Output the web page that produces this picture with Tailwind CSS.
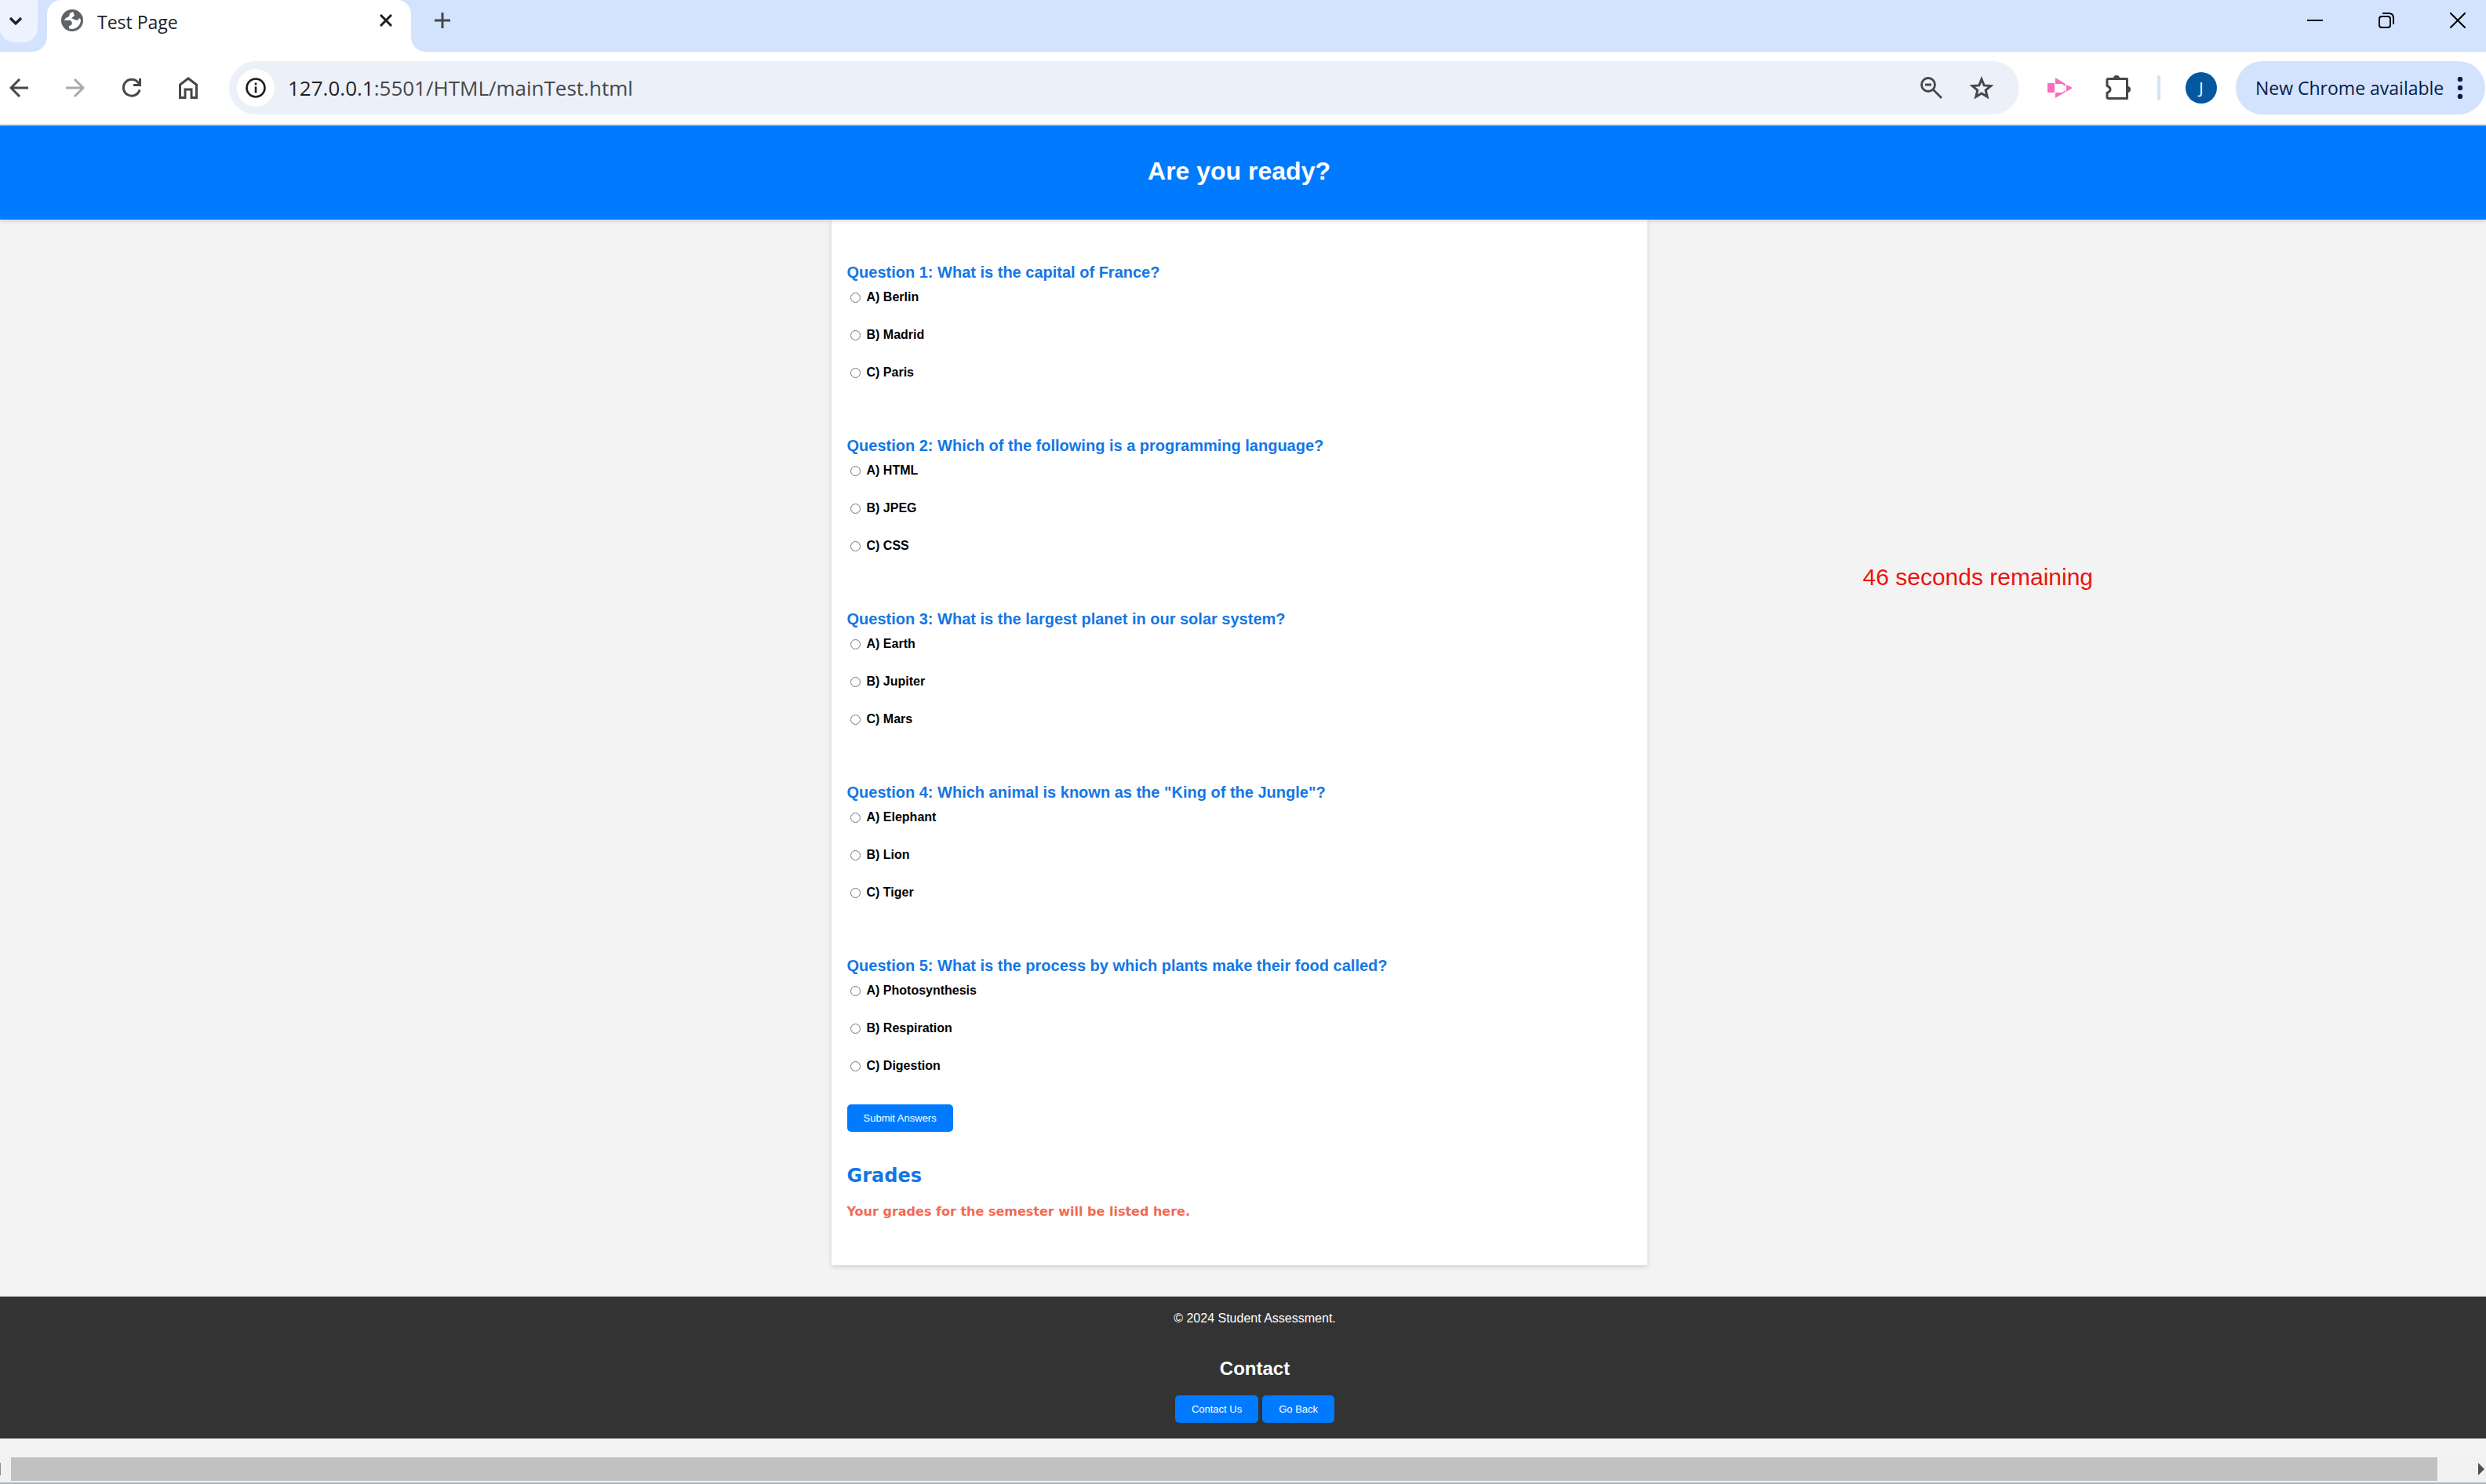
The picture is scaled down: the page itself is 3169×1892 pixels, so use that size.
<!DOCTYPE html>
<html lang="en">
<head>
<meta charset="utf-8">
<title>Test Page</title>
<script src="https://cdn.jsdelivr.net/npm/@tailwindcss/browser@4"></script>
</head>
<body class="flex min-h-screen flex-col bg-[#f3f3f3] font-['Liberation_Sans',Arial,sans-serif] text-black">

<!-- Tab strip -->
<div class="flex h-[66px] items-start bg-[#d3e2fd] font-['Open_Sans','Segoe_UI',sans-serif]">
  <button aria-label="Search tabs" class="flex h-[54px] w-12 items-center justify-center rounded-b-[18px] bg-[#ecf2fe] pr-2">
    <svg class="size-6" viewBox="0 0 24 24" fill="none" stroke="#1f1f1f" stroke-width="3.2"><path d="M5 8l7 7 7-7"/></svg>
  </button>
  <div class="relative ml-3 flex h-[66px] w-[464px] items-start rounded-t-[18px] bg-white pt-3 pl-[18px]">
    <svg class="absolute bottom-0 -left-5 size-5" viewBox="0 0 20 20"><path d="M20 0v20H0C12 20 20 12 20 0z" fill="#fff"/></svg>
    <svg class="absolute -right-5 bottom-0 size-5" viewBox="0 0 20 20"><path d="M0 0v20h20C8 20 0 12 0 0z" fill="#fff"/></svg>
    <svg class="size-7" viewBox="0 0 28 28"><circle cx="14" cy="14" r="14" fill="#5f6368"/><path d="M15 3L11 5 10 9 6 11 3.500 14H12L14 17 13 20 10 21V24.500C17 26.500 25 22 25 13L23 11 21 14 17 13 13 11 17 8z" fill="#fff"/></svg>
    <span class="ml-[18px] flex-1 text-[23px]/8 text-[#1f1f1f]">Test Page</span>
    <button aria-label="Close tab" class="mr-[18px] flex size-7 items-center justify-center">
      <svg class="size-4" viewBox="0 0 16 16" stroke="#1f1f1f" stroke-width="3"><path d="M1 1l14 14M15 1L1 15"/></svg>
    </button>
  </div>
  <button aria-label="New tab" class="ml-[26px] flex h-[52px] w-7 items-center justify-center">
    <svg class="size-5" viewBox="0 0 20 20" stroke="#474747" stroke-width="3"><path d="M10 0v20M0 10h20"/></svg>
  </button>
  <div class="ml-auto flex h-[52px] items-center pr-0.5">
    <button aria-label="Minimize" class="flex w-[91px] justify-center"><svg class="size-5" viewBox="0 0 20 20" stroke="#000" stroke-width="2"><path d="M0 10h20"/></svg></button>
    <button aria-label="Restore" class="flex w-[91px] justify-center"><svg class="size-5" viewBox="0 0 20 20" fill="none" stroke="#000" stroke-width="2"><rect x="1" y="5" width="14" height="14" rx="3"/><path d="M5 1h8q6 0 6 6v8"/></svg></button>
    <button aria-label="Close" class="flex w-20 justify-center pl-[11px]"><svg class="size-5" viewBox="0 0 20 20" stroke="#000" stroke-width="2"><path d="M0 0l20 20M20 0L0 20"/></svg></button>
  </div>
</div>

<!-- Toolbar -->
<div class="flex h-[94px] items-center border-b-2 border-[#dfe3e6] bg-white font-['Open_Sans','Segoe_UI',sans-serif]">
  <div class="flex gap-6">
    <button aria-label="Back" class="flex size-12 items-center justify-center"><svg class="size-6" viewBox="0 0 24 24" fill="none" stroke="#474747" stroke-width="3"><path d="M24 12H2M13 1L2 12l11 11"/></svg></button>
    <button aria-label="Forward" class="flex size-12 items-center justify-center"><svg class="size-6" viewBox="0 0 24 24" fill="none" stroke="#a9a9a9" stroke-width="3"><path d="M0 12h22M11 1l11 11-11 11"/></svg></button>
    <button aria-label="Reload" class="flex size-12 items-center justify-center"><svg class="size-6" viewBox="0 0 24 24" fill="none" stroke="#474747" stroke-width="3"><path d="M22 14.500A10.500 10.500 0 1 1 20 5L22 8M22.500 0v8.500H14"/></svg></button>
    <button aria-label="Home" class="flex size-12 items-center justify-center"><svg class="h-7 w-6" viewBox="0 0 24 28" fill="none" stroke="#474747" stroke-width="3"><path d="M1.500 26.500V10L12 2l10.500 8v16.500h-6.500V16H8v10.500z"/></svg></button>
  </div>
  <div class="ml-7 flex h-[68px] flex-1 items-center rounded-full bg-[#ebf0f9] pl-[10px]">
    <button aria-label="Site information" class="flex size-12 items-center justify-center rounded-full bg-white"><svg class="size-[26px]" viewBox="0 0 26 26" fill="none" stroke="#1f1f1f" stroke-width="2.600"><circle cx="13" cy="13" r="11.500"/><path d="M13 11.500v8M13 6.500v3"/></svg></button>
    <div class="ml-[17px] flex-1 text-[26px]/9 text-[#474747]"><span class="text-[#1f1f1f]">127.0.0.1</span>:5501/HTML/mainTest.html</div>
    <button aria-label="Zoom" class="flex w-12 justify-center"><svg class="size-7" viewBox="0 0 28 28" fill="none" stroke="#474747" stroke-width="2.800"><circle cx="10" cy="10" r="8.500"/><path d="M16 16l11 11M6 10h8"/></svg></button>
    <button aria-label="Bookmark" class="mr-6 ml-4 flex w-12 justify-center"><svg class="h-[30px] w-[30px]" viewBox="0 0 30 30" fill="none" stroke="#474747" stroke-width="3"><path d="M15 4l3.200 7.900 8.500.7-6.500 5.500 2 8.300-7.200-4.400-7.200 4.400 2-8.300-6.500-5.500 8.500-.7z"/></svg></button>
  </div>
  <button aria-label="Screen recorder" class="ml-7 flex size-12 items-center justify-center"><svg class="h-[26px] w-8" viewBox="0 0 32 26" fill="#ff6ac1"><path d="M0 7h9v12H0zM10 0l13 8-1 3-3-3h-9zM10 26l13-8-1-2-3 3h-9zM24 9l8 4-8 5z"/></svg></button>
  <button aria-label="Extensions" class="ml-[26px] flex size-12 items-center justify-center"><svg class="size-8" viewBox="0 0 32 32"><path d="M10 4a4 4 0 0 1 8 0zM28 14a4 4 0 0 1 0 8z" fill="#474747"/><path d="M3.500 4.500h24v25h-24a1.500 1.500 0 0 1-1.500-1.500v-5.500q4-1.500 4-4.500t-4-4.500V6a1.500 1.500 0 0 1 1.500-1.500z" fill="none" stroke="#474747" stroke-width="3" stroke-linejoin="round"/></svg></button>
  <div class="ml-[26px] h-8 w-1 rounded-full bg-[#d3e2fd]"></div>
  <button class="ml-8 size-10 rounded-full bg-[#0557a0] text-xl text-white">J</button>
  <button class="mr-px ml-6 flex h-[68px] w-[318px] items-center justify-between rounded-full bg-[#d3e2fd] pr-7 pl-[25px] text-[23px]/8 text-[#041e49]">New Chrome available
    <svg class="h-7 w-2" viewBox="0 0 8 28" fill="#041e49"><circle cx="4" cy="3" r="3.200"/><circle cx="4" cy="14" r="3.200"/><circle cx="4" cy="25" r="3.200"/></svg>
  </button>
</div>

<header class="relative flex h-[120px] items-center justify-center bg-[#007bff] pr-2.5 pb-1 shadow-[0_2px_5px_rgba(0,0,0,0.15)]">
  <h1 class="text-[32px]/9 font-bold text-white">Are you ready?</h1>
</header>

<div class="grid grid-cols-[1fr_1040px_1fr] pr-2.5">
  <main class="col-start-2 bg-white px-5 pt-[55px] pb-[58px] shadow-[0_2px_6px_rgba(0,0,0,0.15)]">
    <form>
      <fieldset class="h-[221px]">
        <legend class="text-xl/6 font-bold text-[#1277e6]">Question 1: What is the capital of France?</legend>
        <div class="mt-2.5 flex flex-col gap-7 text-base/5 font-bold">
          <label class="flex items-center gap-2 pl-1"><input type="radio" name="q1" class="size-[13px]">A) Berlin</label>
          <label class="flex items-center gap-2 pl-1"><input type="radio" name="q1" class="size-[13px]">B) Madrid</label>
          <label class="flex items-center gap-2 pl-1"><input type="radio" name="q1" class="size-[13px]">C) Paris</label>
        </div>
      </fieldset>
      <fieldset class="h-[221px]">
        <legend class="text-xl/6 font-bold text-[#1277e6]">Question 2: Which of the following is a programming language?</legend>
        <div class="mt-2.5 flex flex-col gap-7 text-base/5 font-bold">
          <label class="flex items-center gap-2 pl-1"><input type="radio" name="q2" class="size-[13px]">A) HTML</label>
          <label class="flex items-center gap-2 pl-1"><input type="radio" name="q2" class="size-[13px]">B) JPEG</label>
          <label class="flex items-center gap-2 pl-1"><input type="radio" name="q2" class="size-[13px]">C) CSS</label>
        </div>
      </fieldset>
      <fieldset class="h-[221px]">
        <legend class="text-xl/6 font-bold text-[#1277e6]">Question 3: What is the largest planet in our solar system?</legend>
        <div class="mt-2.5 flex flex-col gap-7 text-base/5 font-bold">
          <label class="flex items-center gap-2 pl-1"><input type="radio" name="q3" class="size-[13px]">A) Earth</label>
          <label class="flex items-center gap-2 pl-1"><input type="radio" name="q3" class="size-[13px]">B) Jupiter</label>
          <label class="flex items-center gap-2 pl-1"><input type="radio" name="q3" class="size-[13px]">C) Mars</label>
        </div>
      </fieldset>
      <fieldset class="h-[221px]">
        <legend class="text-xl/6 font-bold text-[#1277e6]">Question 4: Which animal is known as the "King of the Jungle"?</legend>
        <div class="mt-2.5 flex flex-col gap-7 text-base/5 font-bold">
          <label class="flex items-center gap-2 pl-1"><input type="radio" name="q4" class="size-[13px]">A) Elephant</label>
          <label class="flex items-center gap-2 pl-1"><input type="radio" name="q4" class="size-[13px]">B) Lion</label>
          <label class="flex items-center gap-2 pl-1"><input type="radio" name="q4" class="size-[13px]">C) Tiger</label>
        </div>
      </fieldset>
      <fieldset>
        <legend class="text-xl/6 font-bold text-[#1277e6]">Question 5: What is the process by which plants make their food called?</legend>
        <div class="mt-2.5 flex flex-col gap-7 text-base/5 font-bold">
          <label class="flex items-center gap-2 pl-1"><input type="radio" name="q5" class="size-[13px]">A) Photosynthesis</label>
          <label class="flex items-center gap-2 pl-1"><input type="radio" name="q5" class="size-[13px]">B) Respiration</label>
          <label class="flex items-center gap-2 pl-1"><input type="radio" name="q5" class="size-[13px]">C) Digestion</label>
        </div>
      </fieldset>
      <button type="button" class="mt-[39px] block rounded-[5px] bg-[#007bff] px-[21px] py-[10px] text-[13px]/[15px] text-white">Submit Answers</button>
    </form>
    <section class="mt-10 font-['DejaVu_Sans',Verdana,sans-serif] font-bold">
      <h2 class="text-2xl/8 text-[#1277e6]">Grades</h2>
      <p class="mt-5 text-base/5 text-[#f26a53]">Your grades for the semester will be listed here.</p>
    </section>
  </main>
  <p class="pt-[436px] pl-[275px] text-[30px]/10 text-[#ee1111]">46 seconds remaining</p>
</div>

<footer class="mt-10 flex flex-col items-center bg-[#333] pt-[18px] pb-5 pl-[30px] text-white">
  <p class="text-base/5">© 2024 Student Assessment.</p>
  <h2 class="mt-10 text-2xl/7 font-bold">Contact</h2>
  <div class="mt-5 flex gap-[5px]">
    <button class="rounded-[5px] bg-[#007bff] px-[21px] py-[10px] text-[13px]/[15px]">Contact Us</button>
    <button class="rounded-[5px] bg-[#007bff] px-[21px] py-[10px] text-[13px]/[15px]">Go Back</button>
  </div>
</footer>

<!-- Horizontal scrollbar -->
<div class="mt-auto flex h-[34px] items-start border-b-2 border-[#b0b5b9] bg-[#f1f1f1]">
  <svg class="mt-[7px] h-4 w-px" viewBox="0 0 1 16"><path d="M0 0h1v16H0z" fill="#8c8c8c"/></svg>
  <div class="ml-[13px] h-[30px] flex-1 bg-[#c1c1c1]"></div>
  <svg class="mt-[7px] mr-0.5 ml-[52px] h-4 w-2" viewBox="0 0 8 16"><path d="M0 0l8 8-8 8z" fill="#505050"/></svg>
</div>
</body>
</html>
